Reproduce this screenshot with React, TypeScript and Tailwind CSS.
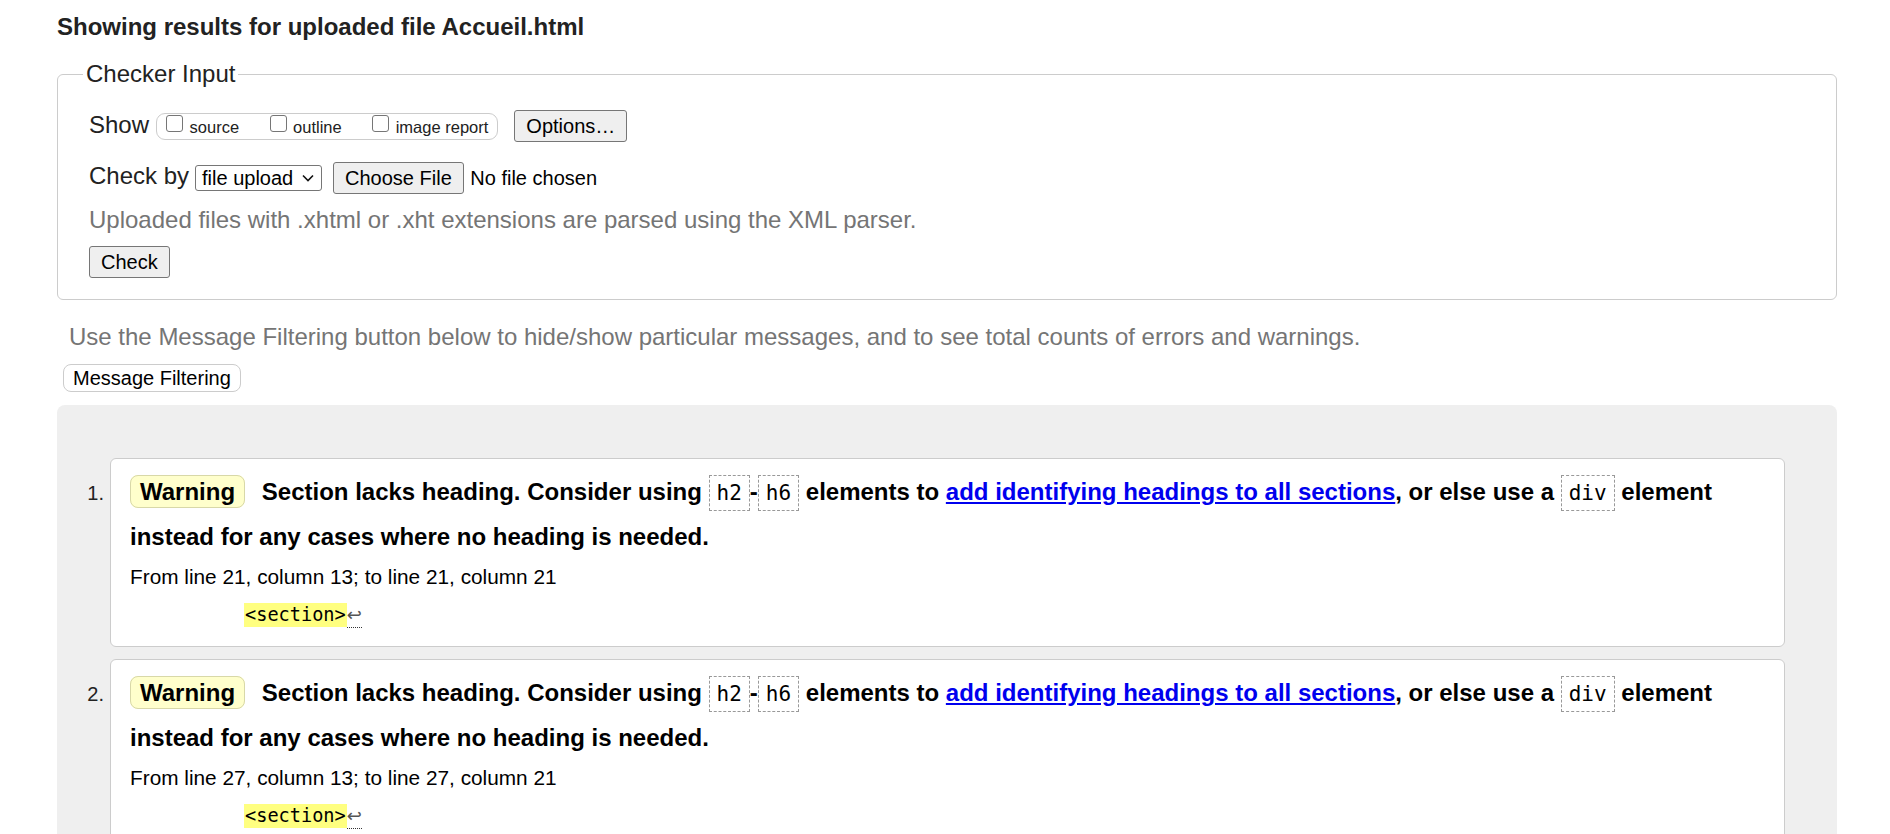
import React from 'react';

type Message = {
    id: number;
    line: number;
};

const messages: Message[] = [
    { id: 1, line: 21 },
    { id: 2, line: 27 },
];

const Btn: React.FC<{ children: React.ReactNode; className?: string }> = ({ children, className = '' }) => (
    <button
        type="button"
        className={`h-[32px] px-[11px] border border-[#767676] rounded-[3px] bg-[#efefef] text-[20px] leading-[24px] text-black ${className}`}
    >
        {children}
    </button>
);

const Check: React.FC<{ label: string; first?: boolean }> = ({ label, first }) => (
    <span className={`flex items-start ${first ? '' : 'ml-[30.5px]'}`}>
        <input
            type="checkbox"
            className="appearance-none mt-[1px] w-[17px] h-[17px] border border-[#767676] rounded-[3px] bg-white"
        />
        <span className="ml-[6.5px] mt-[4px] text-[16.5px] leading-[19px] text-[#222]">{label}</span>
    </span>
);

const Code: React.FC<{ children: React.ReactNode }> = ({ children }) => (
    <code className="px-[7px] py-[5px] border border-dashed border-[#999] font-['DejaVu_Sans_Mono',monospace] text-[21px] font-normal text-black">
        {children}
    </code>
);

const MessageCard: React.FC<{ msg: Message }> = ({ msg }) => (
    <li className={`flex items-baseline ${msg.id > 1 ? 'mt-[12px]' : ''}`}>
        <span className="w-[47px] shrink-0 text-right text-[20px] text-[#222]">{msg.id}.</span>
        <div className="ml-[6px] flex-1 border border-[#ccc] rounded-[6px] bg-white pt-[11px] pl-[19px] pr-[19px] pb-[19px]">
            <p className="text-[24px] font-bold leading-[44px] text-black">
                <strong className="mr-[10px] px-[9px] py-[2px] border border-[#d8d8a8] rounded-[8px] bg-[#ffffcc]">Warning</strong>{' '}
                Section lacks heading. Consider using <Code>h2</Code>-<Code>h6</Code> elements to{' '}
                <a href="#" className="text-[#0000ee] underline">add identifying headings to all sections</a>, or else use a{' '}
                <Code>div</Code> element instead for any cases where no heading is needed.
            </p>
            <p className="mt-[6px] text-[20.8px] leading-[24px] text-black">
                From line {msg.line}, column 13; to line {msg.line}, column 21
            </p>
            <div className="mt-[14px] pl-[114px] h-[24px] flex items-start">
                <code className="h-[24px] px-[1px] bg-[#ffff80] font-['DejaVu_Sans_Mono',monospace] text-[18.6px] leading-[24px] text-black">
                    &lt;section&gt;
                </code>
                <span
                    title="Line break"
                    className="h-[25px] border-b border-dotted border-[#333] font-['DejaVu_Sans',sans-serif] text-[18px] leading-[24px] text-[#555]"
                >
                    ↩
                </span>
            </div>
        </div>
    </li>
);

export default function App() {
    return (
        <div className="min-h-screen bg-white pl-[57px] pr-[53px] pt-[13px] font-['Liberation_Sans',Arial,sans-serif] text-[#222]">
            <h2 className="text-[24px] font-bold leading-[28px]">Showing results for uploaded file Accueil.html</h2>

            <fieldset className="mt-[19px] border border-[#ccc] rounded-[6px] pl-[25px] pt-[22px] pb-[21px]">
                <legend className="px-[3px] text-[24px] leading-[28px]">Checker Input</legend>
                <div className="pl-[6px]">
                    <div className="flex items-center h-[32px]">
                        <span className="mb-[2px] text-[24px] leading-[28px]">Show</span>
                        <span className="ml-[7px] h-[27px] flex items-start pl-[9px] pr-[9px] border border-[#ccc] rounded-[9px]">
                            <Check label="source" first />
                            <Check label="outline" />
                            <Check label="image report" />
                        </span>
                        <Btn className="ml-[16px]">Options…</Btn>
                    </div>

                    <div className="mt-[20px] flex items-center h-[32px]">
                        <span className="mb-[4px] text-[24px] leading-[28px]">Check by</span>
                        <span className="ml-[6px] w-[127px] h-[26px] flex items-center justify-between pl-[6px] pr-[7px] border border-[#767676] rounded-[3px] bg-white">
                            <span className="text-[20px] leading-[24px] text-black">file upload</span>
                            <svg width="12" height="8" viewBox="0 0 12 8" fill="none">
                                <path d="M1 1.5 L6 6.5 L11 1.5" stroke="#111" strokeWidth="1.6" />
                            </svg>
                        </span>
                        <Btn className="ml-[11px] h-[31px]">Choose File</Btn>
                        <span className="ml-[6.5px] text-[20px] leading-[24px] text-black">No file chosen</span>
                    </div>

                    <p className="mt-[12px] text-[24px] leading-[28px] text-[#757575]">
                        Uploaded files with .xhtml or .xht extensions are parsed using the XML parser.
                    </p>

                    <div className="mt-[12px] flex">
                        <Btn>Check</Btn>
                    </div>
                </div>
            </fieldset>

            <p className="mt-[23px] pl-[12px] text-[24px] leading-[28px] text-[#757575]">
                Use the Message Filtering button below to hide/show particular messages, and to see total counts of errors and warnings.
            </p>
            <div className="mt-[13px] pl-[6px] flex">
                <button
                    type="button"
                    className="h-[28px] px-[9px] border border-[#ccc] rounded-[8px] bg-white text-[20px] leading-[24px] text-black"
                >
                    Message Filtering
                </button>
            </div>

            <div className="mt-[13px] bg-[#efefef] rounded-[8px] pt-[53px] pr-[52px] pb-[53px]">
                <ol>
                    {messages.map(msg => (
                        <MessageCard key={msg.id} msg={msg} />
                    ))}
                </ol>
            </div>
        </div>
    );
}
